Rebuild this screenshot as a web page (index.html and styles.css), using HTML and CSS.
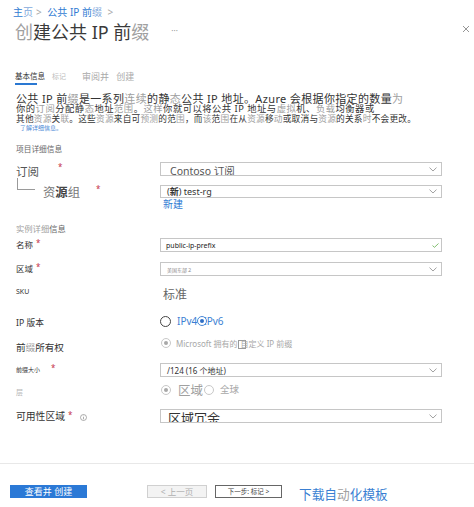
FILE: index.html
```html
<!DOCTYPE html>
<html lang="zh-CN">
<head>
    <meta charset="UTF-8">
    <meta name="viewport" content="width=device-width, initial-scale=1.0">
    <title>创建公共 IP 前缀</title>
    <link rel="stylesheet" href="styles.css">
</head>
<body>
<div class="blade">
    <div class="header">
        <div class="crumbs"><span>主<span class="soft">页</span></span><span class="sep">&gt;</span> <span>公共 IP 前<span class="soft">缀</span></span> <span class="sep">&gt;</span></div>
        <div class="title-row">
            <h1><span class="lt">创</span>建公共 IP 前<span class="lt">缀</span></h1>
            <span class="more">···</span>
            <svg class="close" width="8" height="8" viewBox="0 0 8 8"><path d="M1 1 L7 7 M7 1 L1 7" stroke="#8a8a8a" stroke-width="0.9" fill="none"/></svg>
        </div>
    </div>

    <div class="tabs">
        <span class="tab tab-basic">基本信息</span>
        <span class="tab tab-tags">标记</span>
        <span class="tab tab-review">审阅并 创建</span>
    </div>

    <div class="intro">
        <div class="l1">公共 IP 前<span class="lt">缀</span>是一系列<span class="lt">连续</span>的静<span class="lt">态</span>公共 IP 地址。Azure 会根据你指定的数量<span class="lt">为</span></div>
        <div class="l2">你的<span class="lt">订阅</span>分配静<span class="lt">态</span>地址<span class="lt">范围</span>。<span class="lt">这样</span>你就可以将公共 IP 地址与<span class="lt">虚拟</span>机、<span class="lt">负载</span>均衡器或</div>
        <div class="l3">其他<span class="lt">资源</span>关<span class="lt">联</span>。这些<span class="lt">资源</span>来自可<span class="lt">预测</span>的范<span class="lt">围</span>，而<span class="lt">该</span>范<span class="lt">围</span>在从<span class="lt">资源</span>移<span class="lt">动</span>或取消与<span class="lt">资源</span>的关系<span class="lt">时</span>不会更改。</div>
        <div class="l4">了解详细信息。</div>
    </div>

    <div class="section sec-project">项目详细信息</div>

    <div class="row row-sub">
        <div class="lbl lbl-sub">订阅<i class="req req-sub">*</i></div>
        <div class="field">
            <div class="select sel-sub">
                <span class="val">Contoso 订阅</span>
                <svg class="chev" width="8" height="5" viewBox="0 0 8 5"><path d="M0.5 0.6 L4 4 L7.5 0.6" fill="none" stroke="#8a8a8a" stroke-width="0.8"/></svg>
            </div>
        </div>
    </div>

    <div class="row row-rg">
        <div class="lbl lbl-rg">
            <span class="tree"></span>
            <span class="rg-text">资<b>源</b>组</span><i class="req req-rg">*</i>
        </div>
        <div class="field field-rg">
            <div class="select sel-rg">
                <span class="val">(<b>新</b>) test-rg</span>
                <svg class="chev" width="8" height="5" viewBox="0 0 8 5"><path d="M0.5 0.6 L4 4 L7.5 0.6" fill="none" stroke="#8a8a8a" stroke-width="0.8"/></svg>
            </div>
            <a class="link-new">新建</a>
        </div>
    </div>

    <div class="section sec-instance"><span class="lt">实例详细</span>信息</div>

    <div class="row row-name">
        <div class="lbl lbl-name">名称<i class="req">*</i></div>
        <div class="field">
            <div class="select sel-name">
                <span class="val">public-ip-prefix</span>
                <svg class="check" width="7" height="5" viewBox="0 0 7 5"><path d="M0.5 2.6 L2.5 4.3 L6.5 0.5" fill="none" stroke="#74b860" stroke-width="0.9"/></svg>
            </div>
        </div>
    </div>

    <div class="row row-region">
        <div class="lbl lbl-region">区域<i class="req">*</i></div>
        <div class="field">
            <div class="select sel-region">
                <span class="val">美国东部 2</span>
                <svg class="chev" width="8" height="5" viewBox="0 0 8 5"><path d="M0.5 0.6 L4 4 L7.5 0.6" fill="none" stroke="#8a8a8a" stroke-width="0.8"/></svg>
            </div>
        </div>
    </div>

    <div class="row row-sku">
        <div class="lbl lbl-sku">SKU</div>
        <div class="field">
            <span class="sku-val">标准</span>
        </div>
    </div>

    <div class="row row-ipver">
        <div class="lbl lbl-ipver">IP 版本</div>
        <div class="field options">
            <span class="radio"></span>
            <span class="opt-ip opt-v4">IPv4</span>
            <span class="radio on"></span>
            <span class="opt-ip">IPv6</span>
        </div>
    </div>

    <div class="row row-owner">
        <div class="lbl lbl-owner">前<span class="lt">缀</span>所有权</div>
        <div class="field options">
            <span class="radio dis sel up"></span>
            <span class="opt-owner">Microsoft 拥有的<span class="box"></span>自定义 IP 前<span class="lt">缀</span></span>
        </div>
    </div>

    <div class="row row-size">
        <div class="lbl lbl-size">前缀大小<i class="req req-size">*</i></div>
        <div class="field">
            <div class="select sel-size">
                <span class="val">/124 (16 个地址)</span>
                <svg class="chev" width="8" height="5" viewBox="0 0 8 5"><path d="M0.5 0.6 L4 4 L7.5 0.6" fill="none" stroke="#8a8a8a" stroke-width="0.8"/></svg>
            </div>
        </div>
    </div>

    <div class="row row-tier">
        <div class="lbl lbl-tier">层</div>
        <div class="field options">
            <span class="radio dis sel up2"></span>
            <span class="opt-region">区域</span>
            <span class="radio dis up2 r-global"></span>
            <span class="opt-global">全球</span>
        </div>
    </div>

    <div class="row row-zone">
        <div class="lbl lbl-zone">可用性区域<i class="req">*</i>
            <svg class="info" width="7" height="7" viewBox="0 0 7 7"><circle cx="3.5" cy="3.5" r="3" fill="none" stroke="#8a8a8a" stroke-width="0.7"/><path d="M3.5 3 V5.3" stroke="#8a8a8a" stroke-width="0.7"/><circle cx="3.5" cy="1.9" r="0.45" fill="#8a8a8a"/></svg>
        </div>
        <div class="field">
            <div class="select sel-zone">
                <span class="val">区域冗余</span>
                <svg class="chev" width="8" height="5" viewBox="0 0 8 5"><path d="M0.5 0.6 L4 4 L7.5 0.6" fill="none" stroke="#8a8a8a" stroke-width="0.8"/></svg>
            </div>
        </div>
    </div>

    <div class="footer">
        <button class="btn btn-primary">查看并 创建</button>
        <button class="btn btn-prev">&lt; 上一页</button>
        <button class="btn btn-next">下一步: 标记 &gt;</button>
        <a class="download">下载自<span class="lt">动</span>化模板</a>
    </div>
</div>
</body>
</html>
```

FILE: styles.css
```css
* {
    box-sizing: border-box;
}
body {
    margin: 0;
    font-family: "Noto Sans", "Noto Sans CJK SC", sans-serif;
    color: #333;
    background: #fff;
}
.blade {
    width: 474px;
    height: 507px;
    overflow: hidden;
}
.lt {
    color: #a0a0a0;
}

/* header */
.header {
    padding: 5px 4px 0 13px;
}
.crumbs {
    height: 14px;
    font-size: 10px;
    line-height: 14px;
    color: #2f7bd3;
    white-space: nowrap;
}
.crumbs .soft {
    color: #7fa9dc;
}
.crumbs .sep {
    color: #a8a8a8;
    margin: 0 3px;
}
.title-row {
    display: flex;
    align-items: center;
    height: 24px;
    margin-top: 1px;
}
.title-row h1 {
    margin: 0 0 0 2px;
    font-size: 18px;
    font-weight: 400;
    line-height: 24px;
    color: #3a3a3a;
    white-space: nowrap;
}
.more {
    margin: 0 0 4px 22px;
    font-size: 8px;
    color: #999;
}
.close {
    margin: 0 0 6px auto;
}

/* tabs */
.tabs {
    display: flex;
    height: 15px;
    margin-top: 26px;
    padding-left: 15px;
}
.tab {
    height: 15px;
    line-height: 13px;
    white-space: nowrap;
}
.tab-basic {
    font-size: 7.5px;
    color: #333;
    background: linear-gradient(#2a78d2, #2a78d2) no-repeat left bottom / 22px 2px;
}
.tab-tags {
    margin-left: 7px;
    font-size: 7px;
    color: #bdbdbd;
}
.tab-review {
    margin-left: 16px;
    font-size: 9px;
    color: #aaa;
    word-spacing: 5px;
}

/* intro text */
.intro {
    margin-top: 8px;
    padding-left: 16px;
    white-space: nowrap;
    color: #333;
}
.l1 {
    font-size: 11px;
    line-height: 11px;
    letter-spacing: 0.35px;
}
.l2 {
    font-size: 9.3px;
    line-height: 10px;
    letter-spacing: 0.5px;
}
.l3 {
    font-size: 8.7px;
    line-height: 10px;
    letter-spacing: 0.2px;
}
.l4 {
    margin-top: 1px;
    padding-left: 4px;
    font-size: 6px;
    line-height: 7px;
    color: #4d8ad6;
}

/* sections and rows */
.section {
    padding-left: 16px;
    height: 10px;
    line-height: 10px;
    color: #666;
    white-space: nowrap;
}
.sec-project {
    margin-top: 12px;
    font-size: 7.7px;
}
.sec-instance {
    margin-top: 14px;
    font-size: 8.3px;
}
.row {
    display: flex;
    align-items: center;
    height: 14px;
    padding-left: 16px;
}
.lbl {
    display: flex;
    align-items: center;
    width: 144px;
    flex: none;
    line-height: 14px;
    white-space: nowrap;
}
.field {
    width: 282px;
    flex: none;
}
.req {
    font-style: normal;
    color: #c4314b;
    font-size: 8px;
    line-height: 8px;
    margin: 0 0 4px 3px;
}
.select {
    display: flex;
    align-items: center;
    justify-content: space-between;
    height: 14px;
    border: 1px solid #c6c6c6;
    padding: 0 4px 0 6px;
    overflow: hidden;
    white-space: nowrap;
}
.chev,
.check {
    flex: none;
}

.row-sub {
    margin-top: 8px;
}
.lbl-sub {
    margin-top: 6px;
    font-size: 11.5px;
    color: #555;
}
.req-sub {
    margin: 0 0 10px 19px;
}
.sel-sub .val {
    padding: 3px 0 0 3px;
    font-size: 10.5px;
    color: #555;
}

.row-rg {
    align-items: flex-start;
    height: 34px;
}
.lbl-rg {
    align-items: flex-start;
}
.tree {
    width: 18px;
    height: 12px;
    margin: 2px 0 0 1px;
    border-left: 1px solid #9a9a9a;
    border-bottom: 1px solid #9a9a9a;
}
.rg-text {
    margin: 10px 0 0 8px;
    font-size: 12.3px;
    color: #777;
}
.rg-text b {
    font-weight: 700;
    color: #444;
}
.req-rg {
    margin: 9px 0 0 16px;
}
.field-rg {
    padding-top: 9px;
}
.sel-rg {
    height: 13px;
}
.sel-rg .val {
    font-size: 9px;
    color: #333;
}
.link-new {
    display: block;
    padding-left: 3px;
    font-size: 10px;
    line-height: 12px;
    color: #2f7bd3;
}

.row-name {
    margin-top: 4px;
}
.lbl-name,
.lbl-region {
    font-size: 8.5px;
    color: #333;
}
.sel-name .val {
    padding-left: 0;
    font-size: 7px;
    color: #222;
}
.sel-name {
    padding-left: 5px;
    padding-right: 2px;
}

.row-region {
    margin-top: 10px;
}
.sel-region .val {
    font-size: 5px;
    color: #888;
}

.row-sku {
    margin-top: 10px;
}
.lbl-sku {
    margin-bottom: 2px;
    font-size: 7px;
}
.sku-val {
    margin-left: 3px;
    font-size: 12px;
    line-height: 14px;
    color: #666;
}

.options {
    display: flex;
    align-items: center;
}
.radio {
    flex: none;
    width: 11px;
    height: 11px;
    border: 1px solid #444;
    border-radius: 50%;
    background: #fff;
}
.radio.on {
    display: flex;
    align-items: center;
    justify-content: center;
    width: 10px;
    height: 10px;
    margin-right: -4px;
    border-color: #4a87d6;
    position: relative;
    z-index: 1;
}
.radio.on::after {
    content: "";
    width: 4px;
    height: 4px;
    border-radius: 50%;
    background: #2f6fc6;
}
.radio.dis {
    width: 10px;
    height: 10px;
    border-color: #c8c8c8;
    display: flex;
    align-items: center;
    justify-content: center;
}
.radio.sel::after {
    content: "";
    width: 4px;
    height: 4px;
    border-radius: 50%;
    background: #a8a8a8;
}
.radio.up {
    margin: 0 0 4px 1px;
}
.radio.up2 {
    margin: 0 0 2px 1px;
}

.row-ipver {
    margin-top: 14px;
}
.lbl-ipver {
    margin-top: 4px;
    font-size: 8.7px;
}
.opt-ip {
    font-size: 10px;
    line-height: 14px;
    color: #3c7fd3;
}
.opt-v4 {
    margin-left: 6px;
}

.row-owner {
    margin-top: 10px;
}
.lbl-owner {
    margin-top: 6px;
    font-size: 9.6px;
}
.opt-owner {
    margin: 0 0 2px 5px;
    font-size: 8px;
    line-height: 12px;
    color: #a8a8a8;
    white-space: nowrap;
}
.box {
    display: inline-block;
    width: 8px;
    height: 9px;
    margin: 0 -5px 0 0;
    border: 1px solid #9a9a9a;
    vertical-align: -2px;
}

.row-size {
    margin-top: 11px;
}
.lbl-size {
    font-size: 6px;
}
.req-size {
    margin-left: 11px;
}
.sel-size .val {
    font-size: 8px;
    color: #333;
}

.row-tier {
    margin-top: 7px;
}
.lbl-tier {
    margin-top: 4px;
    font-size: 7px;
    color: #b5b5b5;
}
.opt-region {
    margin-left: 7px;
    font-size: 12.5px;
    line-height: 14px;
    color: #a0a0a0;
}
.r-global {
    margin-left: 9px;
}
.opt-global {
    margin: 0 0 3px 6px;
    font-size: 9.5px;
    line-height: 12px;
    color: #a8a8a8;
}

.row-zone {
    margin-top: 11px;
}
.lbl-zone {
    margin-top: 2px;
    font-size: 9.8px;
}
.info {
    margin-left: 8px;
}
.sel-zone {
    align-items: flex-start;
}
.sel-zone .val {
    padding-left: 1px;
    font-size: 13px;
    line-height: 16px;
    color: #333;
}
.sel-zone .chev {
    margin-top: 4px;
}

/* footer */
.footer {
    display: flex;
    align-items: center;
    margin-top: 40px;
    padding: 17px 0 0 10px;
    border-top: 1px solid #e8e8e8;
}
.btn {
    height: 13px;
    padding: 0;
    font-family: inherit;
    line-height: 11px;
    white-space: nowrap;
    border-radius: 0;
}
.btn-primary {
    width: 77px;
    font-size: 9px;
    color: #fff;
    background: #2b79d6;
    border: 1px solid #2b79d6;
}
.btn-prev {
    width: 60px;
    margin-left: 60px;
    font-size: 8.5px;
    color: #b0b0b0;
    background: #f3f3f3;
    border: 1px solid #d0d0d0;
}
.btn-next {
    width: 67px;
    margin-left: 8px;
    font-size: 6.5px;
    color: #444;
    background: #fff;
    border: 1px solid #666;
}
.download {
    margin: 5px 0 0 17px;
    font-size: 12.7px;
    line-height: 16px;
    color: #3a7fd2;
    white-space: nowrap;
}
```
